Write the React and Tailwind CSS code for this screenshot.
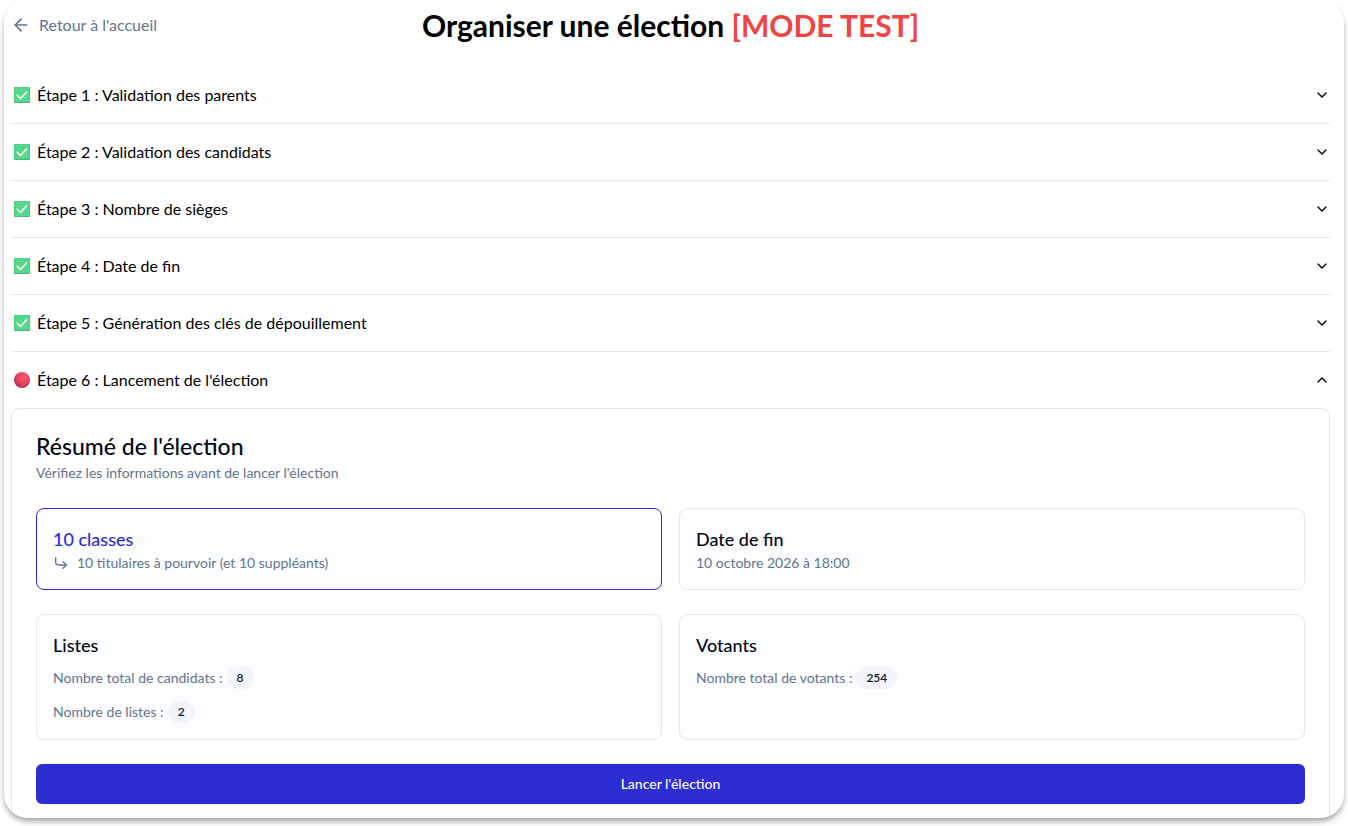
import React, { useState } from 'react';
import { ArrowLeft, ChevronDown, ChevronUp, CornerDownRight } from 'lucide-react';

const steps = [
  { id: 1, title: 'Étape 1 : Validation des parents', done: true },
  { id: 2, title: 'Étape 2 : Validation des candidats', done: true },
  { id: 3, title: 'Étape 3 : Nombre de sièges', done: true },
  { id: 4, title: 'Étape 4 : Date de fin', done: true },
  { id: 5, title: 'Étape 5 : Génération des clés de dépouillement', done: true },
  { id: 6, title: "Étape 6 : Lancement de l'élection", done: false },
];

function DoneIcon() {
  return (
    <svg viewBox="0 0 16 16" className="size-4 shrink-0" aria-hidden="true">
      <rect width="16" height="16" rx="1" fill="#43b87b" />
      <rect x="0.5" y="0.3" width="15" height="14.7" rx="0.8" fill="#55d88c" />
      <path d="M3.2 8.2 6.5 11.4 12.8 4.8" fill="none" stroke="#fff" strokeWidth="1.5" strokeLinecap="round" strokeLinejoin="round" />
    </svg>
  );
}

function PendingIcon() {
  return (
    <svg viewBox="0 0 16 16" className="size-4 shrink-0" aria-hidden="true">
      <defs>
        <radialGradient id="pending" cx="0.62" cy="0.32" r="0.7">
          <stop offset="0" stopColor="#fb5c78" />
          <stop offset="0.6" stopColor="#e5425c" />
          <stop offset="1" stopColor="#b5314a" />
        </radialGradient>
      </defs>
      <circle cx="8" cy="8" r="8" fill="url(#pending)" />
    </svg>
  );
}

function Step({ step, open, onToggle, children }) {
  const Chevron = open ? ChevronUp : ChevronDown;
  return (
    <div className={step.done ? 'border-b border-gray-200' : ''}>
      <h2>
        <button
          type="button"
          aria-expanded={open}
          onClick={onToggle}
          className="flex h-14 w-full cursor-pointer items-center justify-between pl-[3px] text-left text-black"
        >
          <span className="flex items-center gap-[7px] leading-[22px]">
            {step.done ? <DoneIcon /> : <PendingIcon />}
            {step.title}
          </span>
          <Chevron className="size-4 shrink-0" />
        </button>
      </h2>
      {open && children}
    </div>
  );
}

function InfoCard({ title, active, children }) {
  return (
    <div className={`rounded-lg border bg-[#fcfdff] p-4 ${active ? 'border-[#2e2dd1] text-[#2e2dd1]' : 'border-gray-200 text-slate-950'}`}>
      <h4 className="text-lg leading-7 font-medium">{title}</h4>
      <div className="text-sm text-slate-500">{children}</div>
    </div>
  );
}

function Count({ label, value }) {
  return (
    <p className="flex items-center gap-1">
      {label}
      <span className="rounded-full bg-slate-100 px-2.5 py-[3px] text-xs font-semibold text-slate-900">{value}</span>
    </p>
  );
}

function Summary() {
  return (
    <section className="rounded-lg border border-gray-200 p-6">
      <h3 className="text-[23px] leading-[26px] font-medium text-slate-950">Résumé de l'élection</h3>
      <p className="mt-1 text-sm text-slate-500">Vérifiez les informations avant de lancer l'élection</p>

      <div className="mt-[25px] grid grid-cols-2 gap-x-[17px] gap-y-6">
        <InfoCard title="10 classes" active>
          <p className="flex items-center gap-2">
            <CornerDownRight className="size-4" />
            10 titulaires à pourvoir (et 10 suppléants)
          </p>
        </InfoCard>
        <InfoCard title="Date de fin">
          <p>10 octobre 2026 à 18:00</p>
        </InfoCard>
        <InfoCard title="Listes">
          <div className="mt-2 flex flex-col gap-3">
            <Count label="Nombre total de candidats :" value={8} />
            <Count label="Nombre de listes :" value={2} />
          </div>
        </InfoCard>
        <InfoCard title="Votants">
          <div className="mt-2">
            <Count label="Nombre total de votants :" value={254} />
          </div>
        </InfoCard>
      </div>

      <button type="button" className="mt-6 h-10 w-full cursor-pointer rounded-md bg-[#2e2dd1] text-sm font-medium text-slate-50">
        Lancer l'élection
      </button>
    </section>
  );
}

export default function App() {
  const [openStep, setOpenStep] = useState(6);

  return (
    <div className="h-screen overflow-hidden bg-white px-1 pb-2 font-['Lato','Liberation_Sans',sans-serif]">
      <main className="h-full overflow-hidden rounded-3xl bg-white pt-[7px] pr-3.5 pl-[7px] shadow-[0_4px_6px_-1px_rgba(0,0,0,0.4)]">
        <header className="mb-6 grid grid-cols-[1fr_auto_1fr] items-center">
          <a href="#accueil" className="flex items-center gap-2 text-slate-500">
            <ArrowLeft className="size-5" />
            Retour à l'accueil
          </a>
          <h1 className="text-3xl font-bold text-black">
            Organiser une élection <span className="text-[#f04444]">[MODE TEST]</span>
          </h1>
        </header>

        {steps.map((step) => (
          <Step
            key={step.id}
            step={step}
            open={openStep === step.id}
            onToggle={() => setOpenStep(openStep === step.id ? null : step.id)}
          >
            {step.id === 6 && <Summary />}
          </Step>
        ))}
      </main>
    </div>
  );
}
